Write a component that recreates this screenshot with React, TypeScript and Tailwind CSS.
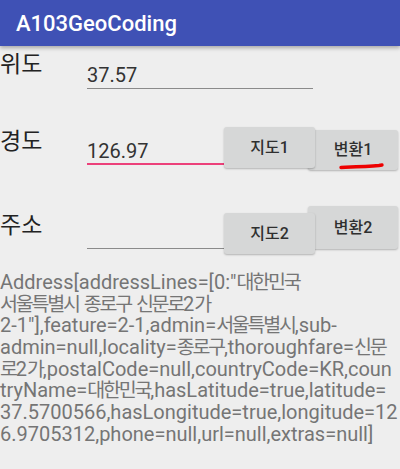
const lines = [
  'Address[addressLines=[0:"대한민국',
  "서울특별시 종로구 신문로2가",
  '2-1"],feature=2-1,admin=서울특별시,sub-',
  "admin=null,locality=종로구,thoroughfare=신문",
  "로2가,postalCode=null,countryCode=KR,coun",
  "tryName=대한민국,hasLatitude=true,latitude=",
  "37.5700566,hasLongitude=true,longitude=12",
  "6.9705312,phone=null,url=null,extras=null]",
]

const font = { fontFamily: 'Roboto, "Noto Sans CJK KR", sans-serif' }

// hangul runs are packed tighter, like the device's korean fallback font
function Line({ text }: { text: string }) {
  const parts = text.split(/([가-힣]+)/)
  return (
    <div className="h-[21.7px] whitespace-nowrap">
      {parts.map((p, i) =>
        /[가-힣]/.test(p) ? (
          <span key={i} className="text-[19.5px] leading-none tracking-[-2.2px]">
            {p}
          </span>
        ) : (
          <span key={i}>{p}</span>
        ),
      )}
    </div>
  )
}

function Btn({ label, className }: { label: string; className: string }) {
  return (
    <button
      className={`relative flex shrink-0 items-center justify-center rounded-[3px] bg-[#d6d7d7] text-[16px] font-medium text-[#2f2f2f] shadow-[0_1px_2px_rgba(0,0,0,0.25)] ${className}`}
    >
      {label}
    </button>
  )
}

export default function App() {
  return (
    <div className="h-[469px] w-[400px] overflow-hidden bg-[#eeeeee]" style={font}>
      <div className="relative z-20 flex h-[46px] items-center bg-[#3f51b5] pl-[16px] text-[22px] font-medium text-white shadow-[0_2px_4px_rgba(0,0,0,0.3)]">
        A103GeoCoding
      </div>

      {/* 위도 */}
      <div className="flex h-[79px]">
        <div className="w-[87px] shrink-0 pt-[4px] text-[23px] leading-[30px] text-[#222]">위도</div>
        <div className="mt-[17px] h-[26px] w-[226px] border-b-[1.5px] border-[#8a8a8a] text-[20px] leading-[24px] text-[#333]">
          37.57
        </div>
      </div>

      {/* 경도 */}
      <div className="flex h-[78px]">
        <div className="w-[87px] shrink-0 pt-[2px] text-[23px] leading-[30px] text-[#222]">경도</div>
        <div className="mt-[14px] h-[26px] w-[137px] shrink-0 border-b-2 border-[#ec407a] text-[20px] leading-[24px] text-[#333]">
          126.97
        </div>
        <Btn label="지도1" className="z-10 mt-[2px] h-[41px] w-[91px]" />
        <div className="relative -ml-[7px] mt-[5px]">
          <Btn label="변환1" className="h-[40px] w-[90px]" />
          <svg className="absolute left-[31px] top-[32px]" width="46" height="8" viewBox="0 0 46 8">
            <path d="M2 5.5 C14 5, 28 4.5, 40 3.5 L43 3" stroke="#ee0000" strokeWidth="3.4" strokeLinecap="round" fill="none" />
          </svg>
        </div>
      </div>

      {/* 주소 */}
      <div className="flex h-[69px]">
        <div className="w-[87px] shrink-0 pt-[8px] text-[23px] leading-[30px] text-[#222]">주소</div>
        <div className="mt-[19px] h-[27px] w-[137px] shrink-0 border-b-[1.5px] border-[#8a8a8a]" />
        <Btn label="지도2" className="z-10 mt-[10px] h-[41px] w-[91px]" />
        <Btn label="변환2" className="-ml-[7px] mt-[3px] h-[43px] w-[90px]" />
      </div>

      <div className="text-[20px] leading-[21.7px] text-[#757575]">
        {lines.map((l) => (
          <Line key={l} text={l} />
        ))}
      </div>
    </div>
  )
}
